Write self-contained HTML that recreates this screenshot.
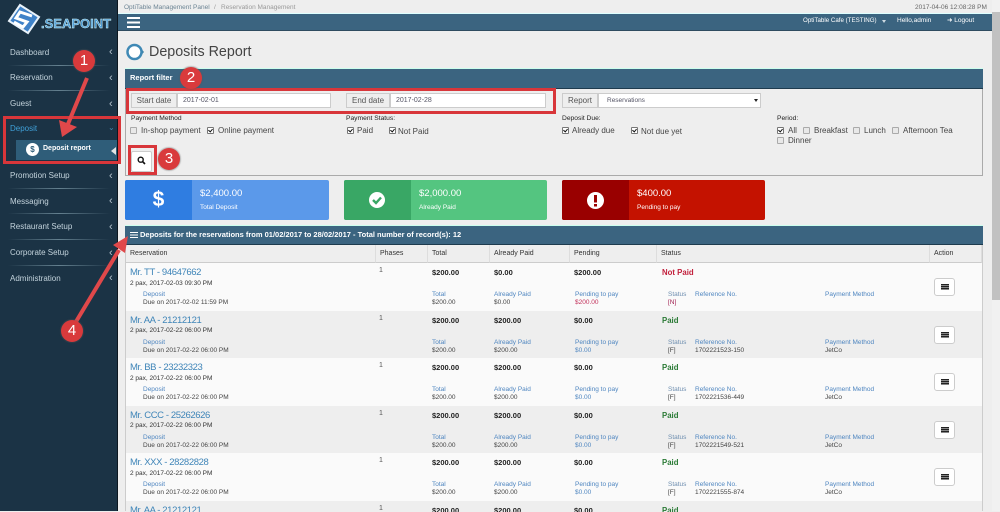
<!DOCTYPE html>
<html lang="en">
<head>
<meta charset="utf-8">
<title>Deposits Report</title>
<style>
html,body{margin:0;padding:0}
body{width:1000px;height:511px;overflow:hidden;position:relative;background:#eee;font-family:"Liberation Sans",sans-serif;color:#333}
div,span,a{position:absolute;white-space:nowrap;box-sizing:border-box}
#side{left:0;top:0;width:117px;height:511px;background:#1b3345}
#sideline{left:117px;top:0;width:1px;height:511px;background:#0c1720}
.m{left:10px;font-size:8px;line-height:10px;color:#c3d3dc}
.c{left:109px;font-size:11px;line-height:10px;color:#b8c6d0}
.sep{left:8px;width:102px;height:1px;background:linear-gradient(90deg,#1b3345,#64808f 50%,#1b3345)}
#top{left:118px;top:13px;width:874px;height:18px;background:#3b6480;border-top:1px solid #dff;border-bottom:1px solid #2f4c60}
.tb{color:#fff;font-size:6.5px;line-height:10px;top:16px}
.ph{left:125px;width:858px;background:#3b6480;border-top:1px solid #cfe;border-bottom:1px solid #1e3b4e}
.lab{height:15px;top:93px;background:#eee;border:1px solid #ccc;font-size:8px;line-height:13px;color:#555;text-align:center}
.inp{height:15px;top:93px;background:#fff;border:1px solid #ccc;font-size:7px;line-height:13px;color:#556;padding-left:5px}
.fl{font-size:6.7px;line-height:9px;color:#222;top:114px}
.cl{font-size:8px;line-height:10px;color:#444}
.cb{width:7px;height:7px;background:#e8e8e8;border:1px solid #aaa;border-radius:1px}
.cb.on{background:#fff;border-color:#777}
.cb.on:after{content:"";position:absolute;left:1px;top:0;width:2px;height:3px;border:solid #111;border-width:0 1.5px 1.5px 0;transform:rotate(40deg)}
.red{border:3px solid #d8363a}
.num{width:22px;height:22px;border-radius:50%;background:#d93a3c;color:#fff;text-align:center;font-size:15px;line-height:22px;box-shadow:0 0 1px 1px rgba(90,90,90,.35)}
.cd{top:180px;height:40px;border-radius:2px}
.ci{left:0;top:0;width:67px;height:40px;border-radius:2px 0 0 2px;text-align:center;color:#fff}
.ca{left:75px;top:8px;color:#fff;font-size:9.5px;line-height:12px}
.cs{left:75px;top:23px;color:#fff;font-size:6.5px;line-height:10px}
#tbl{left:125px;top:245px;width:858px;height:266px;border-left:1px solid #ccc;border-right:1px solid #ccc;background:#fafafa}
.th{top:245px;height:18px;font-size:7px;line-height:18px;color:#333;padding-left:4px;border-right:1px solid #ddd;background:#eee;border-bottom:1px solid #ccc}
.r{left:126px;width:856px;height:48px}
.o{background:#fafafa}.e{background:#eee}
.r span{line-height:10px}
.n{left:4px;top:5px;font-size:9.5px;letter-spacing:-.4px;color:#3f85b8}
.p{left:4px;top:15.5px;font-size:6.5px;color:#333}
.a1{top:3px;left:253px;font-size:7px;color:#555}
.b{top:5px;font-size:7.5px;font-weight:bold;color:#222}
.lb{top:27px;font-size:6.5px;color:#4f86c0}
.v{top:35px;font-size:6.5px;color:#444}
.st{left:536px;top:5px;font-size:7.8px;font-weight:bold}
.btn{left:808px;top:15px;width:21px;height:18px;background:#fff;border:1px solid #ccc;border-radius:3px}
.btn i{position:absolute;left:6px;top:5px;width:8px;height:6px;background:repeating-linear-gradient(#222 0,#222 1.2px,#888 1.2px,#888 2px)}
#sb{left:992px;top:0;width:8px;height:511px;background:#f1f1f1}
#th{left:992px;top:12px;width:8px;height:288px;background:#c1c1c1}
</style>
</head>
<body>
<div id="side"></div>
<div id="sideline"></div>

<svg style="position:absolute;left:0;top:0" width="45" height="40" viewBox="0 0 45 40">
<polygon points="20,5 39,17 28,33 9,21" fill="#3f82c8" stroke="#eaf3fb" stroke-width="2"/>
<path d="M32 16 L20 12 L16 18 L27 22 L23 27 L14 22" fill="none" stroke="#fff" stroke-width="3"/>
</svg>
<span style="left:41px;top:17px;font-size:13px;line-height:14px;font-weight:bold;color:#4d9bd6;-webkit-text-stroke:.4px #dff">.SEAPOINT</span>

<span class="m" style="top:48px">Dashboard</span><span class="c" style="top:47px">‹</span>
<div class="sep" style="top:65px"></div>
<span class="m" style="top:73px">Reservation</span><span class="c" style="top:73px">‹</span>
<div class="sep" style="top:90px"></div>
<span class="m" style="top:99px">Guest</span><span class="c" style="top:99px">‹</span>
<span class="m" style="top:124px;color:#3fa0d8">Deposit</span><span class="c" style="top:123px;left:108px;font-size:8px;color:#3f86ad">⌄</span>
<div style="left:16px;top:140px;width:101px;height:20px;background:#2f5d79"></div>
<div style="left:26px;top:143px;width:13px;height:13px;border-radius:50%;background:#fff;color:#2f5d79;text-align:center;font-size:8px;line-height:13px;font-weight:bold">$</div>
<span style="left:43px;top:144px;font-size:7px;line-height:10px;font-weight:bold;color:#fff">Deposit report</span>
<div style="left:111px;top:147px;width:0;height:0;border:4px solid transparent;border-right:5px solid #e4e4e4;border-left:0"></div>
<span class="m" style="top:171px">Promotion Setup</span><span class="c" style="top:171px">‹</span>
<div class="sep" style="top:188px"></div>
<span class="m" style="top:197px">Messaging</span><span class="c" style="top:196px">‹</span>
<div class="sep" style="top:213px"></div>
<span class="m" style="top:222px">Restaurant Setup</span><span class="c" style="top:222px">‹</span>
<div class="sep" style="top:239px"></div>
<span class="m" style="top:248px">Corporate Setup</span><span class="c" style="top:248px">‹</span>
<div class="sep" style="top:265px"></div>
<span class="m" style="top:274px">Administration</span><span class="c" style="top:273px">‹</span>

<span style="left:124px;top:3px;font-size:6.5px;line-height:9px;color:#6c8494">OptiTable Management Panel</span>
<span style="left:214px;top:3px;font-size:6.5px;line-height:9px;color:#999">/</span>
<span style="left:221px;top:3px;font-size:6.5px;line-height:9px;color:#999">Reservation Management</span>
<span style="left:915px;top:3px;font-size:6.5px;line-height:9px;color:#666">2017-04-06 12:08:28 PM</span>

<div id="top"></div>
<div style="left:127px;top:17px;width:13px;height:11px;background:linear-gradient(#fff 0,#fff 2px,transparent 2px,transparent 4.5px,#fff 4.5px,#fff 6.5px,transparent 6.5px,transparent 9px,#fff 9px,#fff 11px)"></div>
<span class="tb" style="left:803px;font-size:6.2px">OptiTable Cafe (TESTING)</span>
<div style="left:882px;top:20px;width:0;height:0;border:2.5px solid transparent;border-top:3px solid #cfdbe3"></div>
<span class="tb" style="left:897px">Hello,admin</span>
<span class="tb" style="left:947px">➜ Logout</span>

<svg style="position:absolute;left:125px;top:42px" width="20" height="20" viewBox="0 0 20 20">
<path d="M16 6.5 L19 10 L16 13.5 Z" fill="#3f7f9f"/>
<circle cx="9.5" cy="10" r="7" fill="#fff" stroke="#3f89b5" stroke-width="2.5"/>
</svg>
<span style="left:149px;top:44px;font-size:14.3px;line-height:17px;color:#444">Deposits Report</span>

<!-- filter -->
<div style="left:125px;top:88px;width:858px;height:88px;border:1px solid #aaa;border-top:0"></div>
<div class="ph" style="top:68px;height:21px"></div>
<span style="left:130px;top:73px;color:#fff;font-size:7.5px;line-height:10px;font-weight:bold">Report filter</span>

<span class="lab" style="left:131px;width:46px">Start date</span>
<span class="inp" style="left:177px;width:154px">2017-02-01</span>
<span class="lab" style="left:346px;width:44px">End date</span>
<span class="inp" style="left:390px;width:156px">2017-02-28</span>
<span class="lab" style="left:562px;width:36px">Report</span>
<span class="inp" style="left:598px;width:163px;padding-left:8px;font-size:6.5px">Reservations</span>
<div style="left:754px;top:99px;width:0;height:0;border:2px solid transparent;border-top:3px solid #222"></div>

<span class="fl" style="left:131px">Payment Method</span>
<span class="cb" style="left:130px;top:127px"></span><span class="cl" style="left:141px;top:126px">In-shop payment</span>
<span class="cb on" style="left:207px;top:127px"></span><span class="cl" style="left:218px;top:126px">Online payment</span>

<span class="fl" style="left:346px">Payment Status:</span>
<span class="cb on" style="left:347px;top:127px"></span><span class="cl" style="left:357px;top:126px">Paid</span>
<span class="cb on" style="left:389px;top:127px"></span><span class="cl" style="left:398px;top:127px">Not Paid</span>

<span class="fl" style="left:562px">Deposit Due:</span>
<span class="cb on" style="left:562px;top:127px"></span><span class="cl" style="left:572px;top:126px">Already due</span>
<span class="cb on" style="left:631px;top:127px"></span><span class="cl" style="left:641px;top:127px">Not due yet</span>

<span class="fl" style="left:777px">Period:</span>
<span class="cb on" style="left:777px;top:127px"></span><span class="cl" style="left:788px;top:126px">All</span>
<span class="cb" style="left:803px;top:127px"></span><span class="cl" style="left:814px;top:126px">Breakfast</span>
<span class="cb" style="left:853px;top:127px"></span><span class="cl" style="left:864px;top:126px">Lunch</span>
<span class="cb" style="left:892px;top:127px"></span><span class="cl" style="left:903px;top:126px">Afternoon Tea</span>
<span class="cb" style="left:777px;top:137px"></span><span class="cl" style="left:788px;top:136px">Dinner</span>

<div style="left:131px;top:151px;width:21px;height:21px;background:#fff;border:1px solid #ccc;border-radius:2px"></div>
<svg style="position:absolute;left:137px;top:156px" width="9" height="9" viewBox="0 0 9 9"><circle cx="3.7" cy="3.7" r="2.5" fill="none" stroke="#111" stroke-width="1.4"/><path d="M5.5 5.5 L8 8" stroke="#111" stroke-width="1.6"/></svg>

<!-- cards -->
<div class="cd" style="left:125px;width:204px;background:#5b99ea"><div class="ci" style="background:#2f7de1;font-size:21px;line-height:39px;font-weight:bold">$</div><span class="ca">$2,400.00</span><span class="cs">Total Deposit</span></div>
<div class="cd" style="left:344px;width:203px;background:#54c580"><div class="ci" style="background:#39a765"></div><span class="ca">$2,000.00</span><span class="cs">Already Paid</span></div>
<svg style="position:absolute;left:369px;top:192px" width="16" height="16" viewBox="0 0 16 16"><circle cx="8" cy="8" r="8" fill="#fff"/><path d="M4 8 L7 11 L12 5.5" fill="none" stroke="#39a765" stroke-width="2.4"/></svg>
<div class="cd" style="left:562px;width:203px;background:#c41200"><div class="ci" style="background:#990000"></div><span class="ca">$400.00</span><span class="cs">Pending to pay</span></div>
<svg style="position:absolute;left:587px;top:192px" width="17" height="17" viewBox="0 0 17 17"><circle cx="8.5" cy="8.5" r="8.5" fill="#fff"/><rect x="7" y="3" width="3" height="7.5" fill="#990000"/><rect x="7" y="12" width="3" height="2.5" fill="#990000"/></svg>

<!-- table -->
<div class="ph" style="top:225px;height:20px"></div>
<div style="left:130px;top:232px;width:8px;height:6px;background:linear-gradient(#fff 0,#fff 1.2px,transparent 1.2px,transparent 2.4px,#fff 2.4px,#fff 3.6px,transparent 3.6px,transparent 4.8px,#fff 4.8px,#fff 6px)"></div>
<span style="left:140px;top:230px;color:#fff;font-size:7.5px;line-height:10px;font-weight:bold">Deposits for the reservations from 01/02/2017 to 28/02/2017 - Total number of record(s): 12</span>
<div id="tbl"></div>
<span class="th" style="left:126px;width:250px">Reservation</span>
<span class="th" style="left:376px;width:52px">Phases</span>
<span class="th" style="left:428px;width:62px">Total</span>
<span class="th" style="left:490px;width:80px">Already Paid</span>
<span class="th" style="left:570px;width:87px">Pending</span>
<span class="th" style="left:657px;width:273px">Status</span>
<span class="th" style="left:930px;width:52px">Action</span>

<div class="r o" style="top:263px">
<span class="n">Mr. TT - 94647662</span><span class="p">2 pax, 2017-02-03 09:30 PM</span><span class="a1">1</span>
<span class="b" style="left:306px">$200.00</span><span class="b" style="left:368px">$0.00</span><span class="b" style="left:448px">$200.00</span><span class="st" style="color:#c2203c">Not Paid</span>
<span class="lb" style="left:17px">Deposit</span><span class="v" style="left:17px">Due on 2017-02-02 11:59 PM</span>
<span class="lb" style="left:306px">Total</span><span class="v" style="left:306px">$200.00</span>
<span class="lb" style="left:368px">Already Paid</span><span class="v" style="left:368px">$0.00</span>
<span class="lb" style="left:449px">Pending to pay</span><span class="v" style="left:449px;color:#c2305a">$200.00</span>
<span class="lb" style="left:542px;color:#6f8fb0">Status</span><span class="v" style="left:542px;color:#a02050">[N]</span>
<span class="lb" style="left:569px">Reference No.</span><span class="lb" style="left:699px">Payment Method</span>
<div class="btn"><i></i></div>
</div>

<div class="r e" style="top:310.5px">
<span class="n">Mr. AA - 21212121</span><span class="p">2 pax, 2017-02-22 06:00 PM</span><span class="a1">1</span>
<span class="b" style="left:306px">$200.00</span><span class="b" style="left:368px">$200.00</span><span class="b" style="left:448px">$0.00</span><span class="st" style="color:#2a7a35">Paid</span>
<span class="lb" style="left:17px">Deposit</span><span class="v" style="left:17px">Due on 2017-02-22 06:00 PM</span>
<span class="lb" style="left:306px">Total</span><span class="v" style="left:306px">$200.00</span>
<span class="lb" style="left:368px">Already Paid</span><span class="v" style="left:368px">$200.00</span>
<span class="lb" style="left:449px">Pending to pay</span><span class="v" style="left:449px;color:#4f86c0">$0.00</span>
<span class="lb" style="left:542px;color:#6f8fb0">Status</span><span class="v" style="left:542px">[F]</span>
<span class="lb" style="left:569px">Reference No.</span><span class="v" style="left:569px">1702221523-150</span>
<span class="lb" style="left:699px">Payment Method</span><span class="v" style="left:699px">JetCo</span>
<div class="btn"><i></i></div>
</div>

<div class="r o" style="top:358px">
<span class="n">Mr. BB - 23232323</span><span class="p">2 pax, 2017-02-22 06:00 PM</span><span class="a1">1</span>
<span class="b" style="left:306px">$200.00</span><span class="b" style="left:368px">$200.00</span><span class="b" style="left:448px">$0.00</span><span class="st" style="color:#2a7a35">Paid</span>
<span class="lb" style="left:17px">Deposit</span><span class="v" style="left:17px">Due on 2017-02-22 06:00 PM</span>
<span class="lb" style="left:306px">Total</span><span class="v" style="left:306px">$200.00</span>
<span class="lb" style="left:368px">Already Paid</span><span class="v" style="left:368px">$200.00</span>
<span class="lb" style="left:449px">Pending to pay</span><span class="v" style="left:449px;color:#4f86c0">$0.00</span>
<span class="lb" style="left:542px;color:#6f8fb0">Status</span><span class="v" style="left:542px">[F]</span>
<span class="lb" style="left:569px">Reference No.</span><span class="v" style="left:569px">1702221536-449</span>
<span class="lb" style="left:699px">Payment Method</span><span class="v" style="left:699px">JetCo</span>
<div class="btn"><i></i></div>
</div>

<div class="r e" style="top:405.5px">
<span class="n">Mr. CCC - 25262626</span><span class="p">2 pax, 2017-02-22 06:00 PM</span><span class="a1">1</span>
<span class="b" style="left:306px">$200.00</span><span class="b" style="left:368px">$200.00</span><span class="b" style="left:448px">$0.00</span><span class="st" style="color:#2a7a35">Paid</span>
<span class="lb" style="left:17px">Deposit</span><span class="v" style="left:17px">Due on 2017-02-22 06:00 PM</span>
<span class="lb" style="left:306px">Total</span><span class="v" style="left:306px">$200.00</span>
<span class="lb" style="left:368px">Already Paid</span><span class="v" style="left:368px">$200.00</span>
<span class="lb" style="left:449px">Pending to pay</span><span class="v" style="left:449px;color:#4f86c0">$0.00</span>
<span class="lb" style="left:542px;color:#6f8fb0">Status</span><span class="v" style="left:542px">[F]</span>
<span class="lb" style="left:569px">Reference No.</span><span class="v" style="left:569px">1702221549-521</span>
<span class="lb" style="left:699px">Payment Method</span><span class="v" style="left:699px">JetCo</span>
<div class="btn"><i></i></div>
</div>

<div class="r o" style="top:453px">
<span class="n">Mr. XXX - 28282828</span><span class="p">2 pax, 2017-02-22 06:00 PM</span><span class="a1">1</span>
<span class="b" style="left:306px">$200.00</span><span class="b" style="left:368px">$200.00</span><span class="b" style="left:448px">$0.00</span><span class="st" style="color:#2a7a35">Paid</span>
<span class="lb" style="left:17px">Deposit</span><span class="v" style="left:17px">Due on 2017-02-22 06:00 PM</span>
<span class="lb" style="left:306px">Total</span><span class="v" style="left:306px">$200.00</span>
<span class="lb" style="left:368px">Already Paid</span><span class="v" style="left:368px">$200.00</span>
<span class="lb" style="left:449px">Pending to pay</span><span class="v" style="left:449px;color:#4f86c0">$0.00</span>
<span class="lb" style="left:542px;color:#6f8fb0">Status</span><span class="v" style="left:542px">[F]</span>
<span class="lb" style="left:569px">Reference No.</span><span class="v" style="left:569px">1702221555-874</span>
<span class="lb" style="left:699px">Payment Method</span><span class="v" style="left:699px">JetCo</span>
<div class="btn"><i></i></div>
</div>

<div class="r e" style="top:500.5px;height:11px;overflow:hidden">
<span class="n">Mr. AA - 21212121</span><span class="a1">1</span>
<span class="b" style="left:306px">$200.00</span><span class="b" style="left:368px">$200.00</span><span class="b" style="left:448px">$0.00</span><span class="st" style="color:#2a7a35">Paid</span>
</div>

<div id="sb"></div><div id="th"></div>

<!-- annotations -->
<div class="red" style="left:3px;top:116px;width:118px;height:48px"></div>
<div class="red" style="left:126px;top:88px;width:430px;height:26px"></div>
<div class="red" style="left:128px;top:145px;width:29px;height:30px"></div>
<svg style="position:absolute;left:0;top:0" width="1000" height="511" viewBox="0 0 1000 511">
<path d="M87 78 L68 124" stroke="#e0484a" stroke-width="4" fill="none"/>
<polygon points="62,137 59,120 77,127" fill="#e0484a"/>
<path d="M74 325 L119 250" stroke="#e0484a" stroke-width="4" fill="none"/>
<polygon points="128,236 113,245 125,253" fill="#e0484a"/>
</svg>
<div class="num" style="left:73px;top:50px">1</div>
<div class="num" style="left:180px;top:67px">2</div>
<div class="num" style="left:158px;top:148px">3</div>
<div class="num" style="left:61px;top:320px">4</div>
</body>
</html>
